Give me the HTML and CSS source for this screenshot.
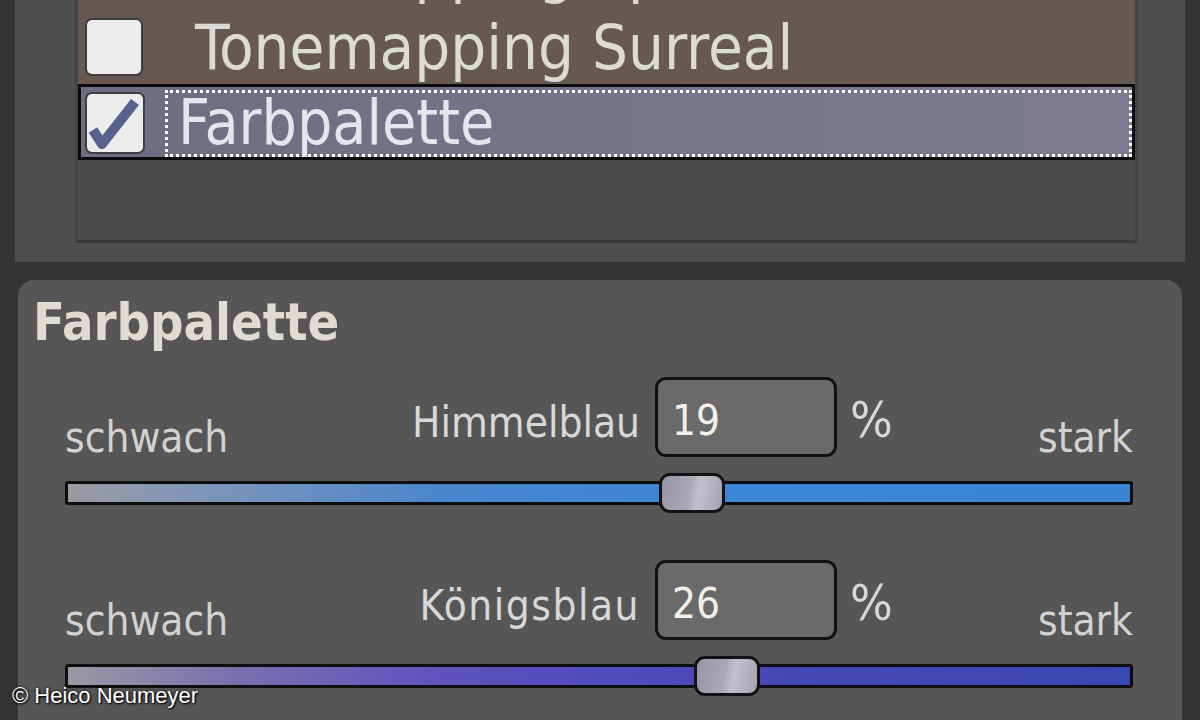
FILE: index.html
```html
<!DOCTYPE html>
<html lang="de">
<head>
<meta charset="utf-8">
<title>Farbpalette</title>
<link rel="stylesheet" href="styles.css">
</head>
<body>
<div class="top-panel">
  <div class="list">
    <div class="row row-prev"><span class="cb"></span><span class="label">Tonemapping Spezial</span></div>
    <div class="row"><span class="cb"></span><span class="label">Tonemapping Surreal</span></div>
    <div class="row selected">
      <span class="cb checked"><svg viewBox="0 0 58 58" width="58" height="58"><path d="M8 38 L17 52 L50 10" fill="none" stroke="#56628c" stroke-width="10" stroke-linejoin="round"/></svg></span>
      <span class="label focus">Farbpalette</span>
    </div>
  </div>
</div>
<div class="panel">
  <h2 class="title">Farbpalette</h2>
  <div class="slider">
    <div class="labels">
      <div class="left"><span class="end">schwach</span><span class="name">Himmelblau</span></div>
      <span class="value">19</span>
      <span class="pct">%</span>
      <span class="end stark">stark</span>
    </div>
    <div class="track sky"><span class="thumb" style="left:591px"></span></div>
  </div>
  <div class="slider second">
    <div class="labels">
      <div class="left"><span class="end">schwach</span><span class="name wide">Königsblau</span></div>
      <span class="value">26</span>
      <span class="pct">%</span>
      <span class="end stark">stark</span>
    </div>
    <div class="track royal"><span class="thumb" style="left:626px"></span></div>
  </div>
</div>
<div class="credit">© Heico Neumeyer</div>
</body>
</html>
```
FILE: styles.css
```css
* { box-sizing: border-box; }
html, body { margin: 0; padding: 0; }
body {
  width: 1200px;
  height: 720px;
  overflow: hidden;
  background: #343434;
  font-family: "DejaVu Sans Condensed", "DejaVu Sans", sans-serif;
  color: #d6d6d6;
  position: relative;
}
.top-panel {
  margin-left: 15px;
  width: 1170px;
  height: 262px;
  background: #4e4e4e;
  padding: 0 47px 19px 60px;
}
.list {
  height: 243px;
  background: #4a4a4a;
  border-left: 3px solid #444;
  border-right: 3px solid #444;
  border-bottom: 3px solid #3a3a3a;
  overflow: hidden;
  display: flex;
  flex-direction: column;
}
.row {
  flex: none;
  height: 78px;
  background: #685852;
  display: flex;
  align-items: flex-start;
  padding-left: 7px;
}
.row-prev { margin-top: -72px; }
.cb {
  flex: none;
  width: 58px;
  height: 58px;
  margin-top: 12px;
  background: #ececec;
  border: 2px solid #3e3e3e;
  border-radius: 7px;
  display: flex;
}
.cb svg { display: block; margin: -2px; }
.label {
  margin-left: 52px;
  font-size: 63px;
  line-height: 72px;
  margin-top: 6px;
  color: #dcdcd6;
  white-space: nowrap;
}
.row.selected {
  height: 76px;
  border: 3px solid #0c0c0c;
  background: linear-gradient(90deg, #6d6d82 0%, #76768c 60%, #7c7b90 100%);
  padding-left: 4px;
}
.row.selected .cb { margin-top: 5px; width: 60px; height: 62px; }
.label.focus {
  flex: 1;
  margin-left: 20px;
  margin-top: 3px;
  height: 67px;
  border: 3px dotted #ffffff;
  padding-left: 10px;
  font-size: 62px;
  line-height: 60px;
  color: #e4e6ee;
}
.panel {
  margin: 18px 0 0 18px;
  width: 1164px;
  height: 440px;
  background: #565656;
  border-radius: 16px 16px 0 0;
  padding: 12px 49px 0 15px;
}
.title {
  margin: 0;
  font-size: 52px;
  line-height: 60px;
  font-weight: bold;
  color: #e0dcd2;
}
.slider { margin-top: 25px; padding-left: 32px; }
.slider.second { margin-top: 55px; }
.labels {
  display: flex;
  align-items: flex-end;
  height: 80px;
}
.left {
  width: 575px;
  display: flex;
  justify-content: space-between;
  align-items: flex-end;
  align-self: stretch;
}
.end, .name, .pct, .value {
  font-size: 42px;
  line-height: 48px;
  white-space: nowrap;
}
.end { margin-bottom: -5px; color: #d2d2d2; }
.name { margin-bottom: 10px; color: #d8d8d8; }
.name.wide { letter-spacing: 1.5px; }
.value {
  margin-left: 15px;
  width: 182px;
  height: 80px;
  align-self: stretch;
  border: 3px solid #111;
  border-radius: 11px;
  background: #6a6a6a;
  padding: 17px 0 0 14px;
  color: #f2f0e8;
}
.pct { margin-left: 13px; margin-bottom: 9px; font-size: 50px; line-height: 56px; color: #d8d8d8; }
.stark { margin-left: auto; }
.track {
  position: relative;
  margin-top: 24px;
  height: 24px;
  border: 3px solid #0e0e0e;
  border-radius: 3px;
}
.track.sky { background: linear-gradient(90deg, #9a9aa2 0%, #7f96b8 12%, #4a86cc 35%, #3b86d6 60%, #3a84d6 100%); }
.track.royal { background: linear-gradient(90deg, #9a98a4 0%, #7a72ae 15%, #5d52bf 35%, #4a48b8 60%, #3a48b2 100%); }
.thumb {
  position: absolute;
  top: -11px;
  width: 66px;
  height: 40px;
  border: 3px solid #121212;
  border-radius: 11px;
  background: linear-gradient(100deg, #9896a6 0%, #a9a7b8 45%, #c2c0cc 60%, #a5a3b3 100%);
}
.credit {
  position: absolute;
  left: 12px;
  top: 683px;
  font-family: "Liberation Sans", Arial, sans-serif;
  font-size: 22px;
  line-height: 26px;
  color: #ffffff;
  text-shadow: 1px 1px 2px #000, 0 0 3px #000;
}
```
